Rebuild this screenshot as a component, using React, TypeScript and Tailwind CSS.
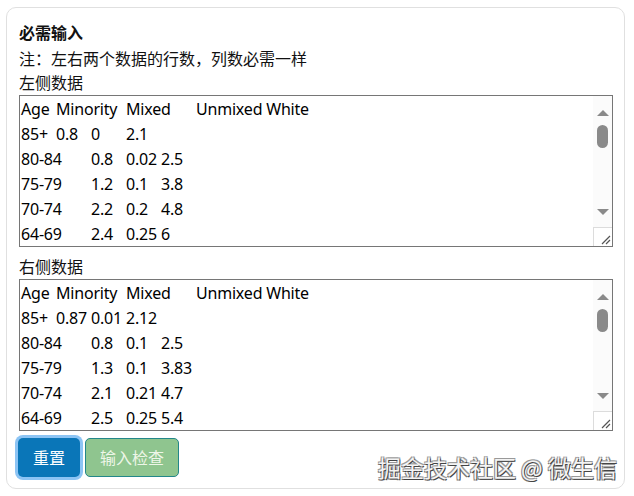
/**
 * DataInputCard - two tab-separated data boxes with reset / check buttons
 */

const leftData = [
  'Age\tMinority\tMixed\tUnmixed White',
  '85+\t0.8\t0\t2.1',
  '80-84\t0.8\t0.02\t2.5',
  '75-79\t1.2\t0.1\t3.8',
  '70-74\t2.2\t0.2\t4.8',
  '64-69\t2.4\t0.25\t6',
  '60-64\t2.6\t0.3\t6.5',
  '55-59\t3.1\t0.35\t7.2',
].join('\n')

const rightData = [
  'Age\tMinority\tMixed\tUnmixed White',
  '85+\t0.87\t0.01\t2.12',
  '80-84\t0.8\t0.1\t2.5',
  '75-79\t1.3\t0.1\t3.83',
  '70-74\t2.1\t0.21\t4.7',
  '64-69\t2.5\t0.25\t5.4',
  '60-64\t2.7\t0.3\t6.4',
  '55-59\t3.0\t0.33\t7.1',
].join('\n')

function DataBox({ value }: { value: string }) {
  return (
    <div className="relative">
      <textarea
        readOnly
        value={value}
        spellCheck={false}
        className="block w-full h-[152px] border border-[#767676] px-[1px] py-[1px] pr-[22px] text-[16px] leading-[25px] tracking-[-0.2px] text-black resize-none overflow-hidden whitespace-pre [tab-size:35px] outline-none font-['Noto_Sans','Noto_Sans_CJK_SC',sans-serif]"
      />
      {/* fake classic scrollbar */}
      <div className="absolute top-[1px] right-[1px] w-[19px] h-[131px] bg-[#fbfbfb] flex flex-col items-center">
        <div className="mt-[14px] w-0 h-0 border-l-[6px] border-r-[6px] border-b-[6px] border-l-transparent border-r-transparent border-b-[#8a8a8a]" />
        <div className="mt-[9px] w-[11px] h-[23px] rounded-full bg-[#8a8a8a]" />
        <div className="mt-[61px] w-0 h-0 border-l-[6px] border-r-[6px] border-t-[6px] border-l-transparent border-r-transparent border-t-[#8a8a8a]" />
      </div>
      <div className="absolute bottom-[1px] right-[1px] w-[19px] h-[19px] bg-white border-l border-t border-[#dcdcdc] flex items-end justify-end">
        <svg width="12" height="12" viewBox="0 0 12 12" className="mb-[1px] mr-[1px]">
          <path d="M3 11 L11 3 M7 11 L11 7" stroke="#555" strokeWidth="1.2" />
        </svg>
      </div>
    </div>
  )
}

export default function App() {
  return (
    <div className="relative w-[634px] h-[496px] bg-white pt-[7px] pl-[6px] pr-[9px] font-['Noto_Sans','Noto_Sans_CJK_SC',sans-serif] text-[16px] text-[#111]">
      <div className="border border-[#e0e0e0] rounded-[10px] pt-[13px] pb-[11px] pl-[12px] pr-[11px]">
        <p className="font-bold leading-[24px] mb-[2px]">必需输入</p>
        <p className="leading-[24px]">注：左右两个数据的行数，列数必需一样</p>
        <p className="leading-[24px]">左侧数据</p>
        <DataBox value={leftData} />
        <p className="leading-[24px] mt-[8px]">右侧数据</p>
        <DataBox value={rightData} />
        <div className="flex items-center gap-[5px] mt-[7px]">
          <button className="h-[39px] px-[15px] rounded-[5px] bg-[#0a76b8] text-white text-[16px] ring-[3px] ring-[#8cc4f4] ml-[-1px]">
            重置
          </button>
          <button className="h-[39px] px-[14px] rounded-[5px] bg-[#8fc58f] border border-[#23878a] text-[#eef6e8] text-[16px]">
            输入检查
          </button>
        </div>
      </div>
      <div className="absolute right-[17px] bottom-[15px] text-[23px] leading-[28px] text-[#f4f4f4] [text-shadow:1px_1px_0_#444,-1px_-1px_0_#999,1px_-1px_0_#999,-1px_1px_0_#777] font-['Noto_Sans_CJK_SC',sans-serif]">
        掘金技术社区 @ 微生信
      </div>
    </div>
  )
}
